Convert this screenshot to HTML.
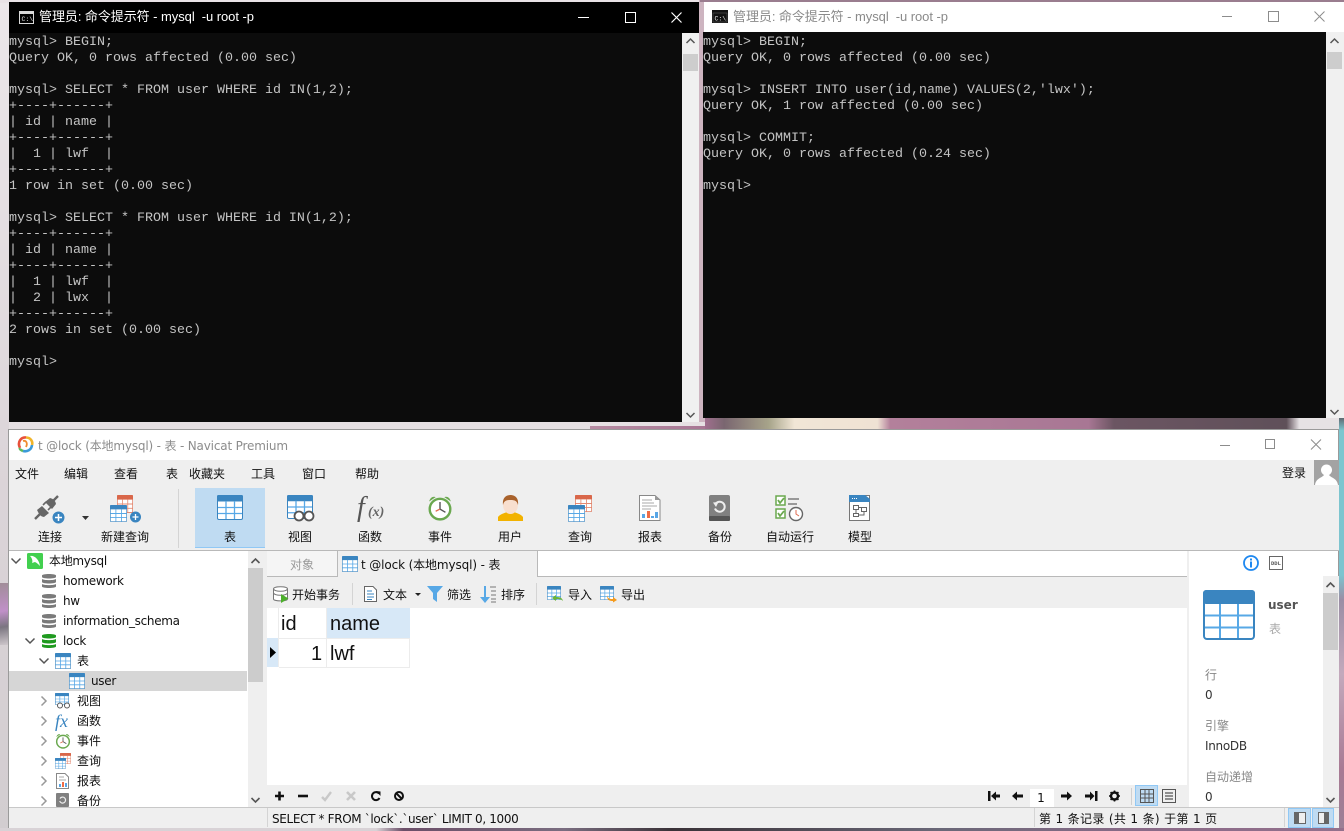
<!DOCTYPE html>
<html lang="zh"><head><meta charset="utf-8"><title>Navicat</title>
<style>
html,body{margin:0;padding:0}
body{width:1344px;height:831px;overflow:hidden;position:relative;background:#dcd6da}
div,pre,svg{position:absolute}
pre{margin:0}
.t{position:absolute;white-space:pre;font:12px/16px "DejaVu Sans","Noto Sans CJK SC",sans-serif;color:#111}
.c{transform:translateX(-50%)}
.l{letter-spacing:-.3px}
.term{font:13.333px/16px "Liberation Mono",monospace;color:#c4c4c4;white-space:pre}
svg{overflow:visible}
</style></head><body>
<svg width="0" height="0" style="left:0;top:0">
<defs>
<symbol id="tb" viewBox="0 0 26 25" preserveAspectRatio="none">
<rect x=".5" y=".5" width="25" height="24" rx="1.5" fill="#fff" stroke="#3a85c0"/>
<rect x="0" y="0" width="26" height="6.5" rx="1.5" fill="#3a85c0"/>
<path d="M1 12.5H25M1 18.5H25M9 6V24M17.500 6V24" stroke="#57a8e6" stroke-width="1.300" fill="none"/>
</symbol>
<symbol id="to" viewBox="0 0 26 25" preserveAspectRatio="none">
<rect x=".5" y=".5" width="25" height="24" rx="1.5" fill="#fff" stroke="#d9674a"/>
<rect x="0" y="0" width="26" height="6.500" rx="1.5" fill="#d9674a"/>
<path d="M1 12.500H25M1 18.500H25M9 6V24M17.500 6V24" stroke="#e58b73" stroke-width="1.300" fill="none"/>
</symbol>
<symbol id="db" viewBox="0 0 14 16" preserveAspectRatio="none">
<path d="M0 2.500C0 .5 14 .5 14 2.500V4C14 6 0 6 0 4ZM0 6C2 7.500 12 7.500 14 6V9C14 11 0 11 0 9ZM0 11C2 12.500 12 12.500 14 11V13.500C14 15.500 0 15.500 0 13.500Z" fill="currentColor"/>
</symbol>
<symbol id="cl" viewBox="0 0 24 24">
<circle cx="12" cy="13" r="9.500" fill="#fff" stroke="#6aa84f" stroke-width="2.200"/>
<path d="M12 6.500V13L17 16" stroke="#555" stroke-width="1.300" fill="none"/>
<path d="M12 13L8 15" stroke="#e06b50" stroke-width="1.200"/>
<path d="M2 6C3 2 6 1 8 2ZM22 6C21 2 18 1 16 2Z" fill="#6aa84f"/>
</symbol>
</defs>
</svg>

<!-- wallpaper -->
<div style="left:0;top:0;width:9px;height:831px;background:linear-gradient(#ece7ea,#dcd5d9 55%,#d2cdd0)"></div>
<div style="left:0;top:0;width:704px;height:3px;background:#e9e2e6"></div>
<div style="left:699px;top:0;width:6px;height:422px;background:#cdb4c0"></div>
<div style="left:700px;top:0;width:644px;height:2px;background:#9a7d8f"></div>
<div style="left:9px;top:422px;width:696px;height:8px;background:#e6e0e3"></div>
<div style="left:590px;top:426px;width:115px;height:4px;background:linear-gradient(90deg,#b78ba2,#a87794)"></div>
<div style="left:705px;top:418px;width:639px;height:12px;background:linear-gradient(90deg,#a06f8e 0,#7a6670 3%,#a7a48a 10%,#f1e6d6 14%,#efe2d4 27%,#b3809b 29%,#a87794 60%,#6b5562 64%,#5f5059 91%,#e6e2e4 93%)"></div>
<div style="left:0;top:583px;width:9px;height:62px;background:linear-gradient(170deg,#a08d98,#c090c8 45%,#7a7580 70%,#cfc8cc)"></div>
<div style="left:1339px;top:418px;width:5px;height:413px;background:linear-gradient(#5f6a72 0,#7cc6cf 3%,#7dc4cf 38%,#9a8ea5 44%,#c3a9bc 62%,#a87a94 85%,#9b8096)"></div>
<div style="left:0;top:828px;width:1344px;height:3px;background:linear-gradient(90deg,#d8d2d6 0,#d8d2d6 28%,#6b4e68 30%,#7a6d80 42%,#3a3238 50%,#6a6878 70%,#8a6a88 85%,#93708c)"></div>

<!-- left terminal -->
<div style="left:9px;top:2px;width:690px;height:31px;background:#000"></div>
<svg style="left:19px;top:11px" width="15" height="13"><rect x=".5" y=".5" width="14" height="12" fill="#000" stroke="#d8d8d8"/><rect x="1" y="1" width="13" height="2" fill="#d8d8d8"/><text x="2.500" y="10" font-size="6.500" fill="#e8e8e8" font-family="Liberation Mono">C:\</text></svg>
<div class="t" style="left:39px;top:9px;color:#fff;font-family:'Liberation Sans','Noto Sans CJK SC',sans-serif;font-size:13px;letter-spacing:-.06px">管理员: 命令提示符 - mysql  -u root -p</div>
<svg style="left:578px;top:10px" width="110" height="14" fill="none" stroke="#fff" stroke-width="1"><path d="M0 7.500H11"/><rect x="47.500" y="2.500" width="10" height="10"/><path d="M93.500 2.500L103.500 12.500M103.500 2.500L93.500 12.500" stroke-width="1.200"/></svg>
<div style="left:9px;top:33px;width:673px;height:389px;background:#0c0c0c"></div>
<pre class="term" style="left:9px;top:35px">mysql&gt; BEGIN;
Query OK, 0 rows affected (0.00 sec)

mysql&gt; SELECT * FROM user WHERE id IN(1,2);
+----+------+
| id | name |
+----+------+
|  1 | lwf  |
+----+------+
1 row in set (0.00 sec)

mysql&gt; SELECT * FROM user WHERE id IN(1,2);
+----+------+
| id | name |
+----+------+
|  1 | lwf  |
|  2 | lwx  |
+----+------+
2 rows in set (0.00 sec)

mysql&gt;</pre>
<div style="left:682px;top:33px;width:17px;height:389px;background:#f0f0f0"></div>
<div style="left:683px;top:54px;width:15px;height:17px;background:#cdcdcd"></div>
<svg style="left:686px;top:38px" width="9" height="6"><path d="M.5 5L4.500 1L8.500 5" fill="none" stroke="#555" stroke-width="1.500"/></svg>
<svg style="left:686px;top:412px" width="9" height="6"><path d="M.5 1L4.500 5L8.500 1" fill="none" stroke="#555" stroke-width="1.500"/></svg>

<!-- right terminal -->
<div style="left:704px;top:2px;width:640px;height:30px;background:#fff"></div>
<svg style="left:712px;top:10px" width="16" height="13"><rect width="16" height="13" fill="#111"/><rect x="1" y="3" width="14" height="9" fill="#111" stroke="#666" stroke-width=".5"/><text x="2.500" y="10.500" font-size="6.500" fill="#eee" font-family="Liberation Mono">C:\</text></svg>
<div class="t" style="left:733px;top:9px;color:#8a8a8a;font-family:'Liberation Sans','Noto Sans CJK SC',sans-serif;font-size:13px;letter-spacing:-.06px">管理员: 命令提示符 - mysql  -u root -p</div>
<svg style="left:1222px;top:9px" width="110" height="14" fill="none" stroke="#8c8c8c" stroke-width="1"><path d="M0 7.500H10"/><rect x="46.500" y="2.500" width="10" height="10"/><path d="M92.500 2.500L102.500 12.500M102.500 2.500L92.500 12.500"/></svg>
<div style="left:703px;top:32px;width:623px;height:386px;background:#0c0c0c"></div>
<pre class="term" style="left:703px;top:35px">mysql&gt; BEGIN;
Query OK, 0 rows affected (0.00 sec)

mysql&gt; INSERT INTO user(id,name) VALUES(2,'lwx');
Query OK, 1 row affected (0.00 sec)

mysql&gt; COMMIT;
Query OK, 0 rows affected (0.24 sec)

mysql&gt;</pre>
<div style="left:1326px;top:32px;width:18px;height:386px;background:#f0f0f0"></div>
<div style="left:1327px;top:52px;width:15px;height:17px;background:#cdcdcd"></div>
<svg style="left:1330px;top:38px" width="9" height="6"><path d="M.5 5L4.500 1L8.500 5" fill="none" stroke="#555" stroke-width="1.500"/></svg>
<svg style="left:1330px;top:409px" width="9" height="6"><path d="M.5 1L4.500 5L8.500 1" fill="none" stroke="#555" stroke-width="1.500"/></svg>

<!-- navicat -->
<div style="left:8px;top:429px;width:1331px;height:399px;background:#fff;border:1px solid #9a9a9a;box-sizing:border-box"></div>
<div style="left:9px;top:460px;width:1330px;height:90px;background:#efefef"></div>
<div style="left:9px;top:550px;width:1330px;height:1px;background:#b9b9b9"></div>
<svg style="left:17px;top:436px" width="17" height="17" fill="none" stroke-width="2.600"><path d="M3 12C0 6 4 1 9 1.500" stroke="#e8503a"/><path d="M9 1.500C14 1.500 16 6 15 9" stroke="#f0b429"/><path d="M15 9C14.500 14 10 16 6 15" stroke="#3a9ad9"/><path d="M6 15C3.500 14 2.500 13 3 12" stroke="#5cb85c"/><path d="M6 5C9 4 11 7 9 11" stroke="#f08c30" stroke-width="1.800"/></svg>
<div class="t" style="left:38px;top:438px;color:#8c8c8c;letter-spacing:-.17px">t @lock (本地mysql) - 表 - Navicat Premium</div>
<svg style="left:1220px;top:438px" width="110" height="14" fill="none" stroke="#8c8c8c"><path d="M0 7.500H10"/><rect x="45.500" y="1.500" width="9" height="9"/><path d="M91 1.500L101 11.500M101 1.500L91 11.500"/></svg>
<div class="t" style="left:15px;top:466px">文件</div><div class="t" style="left:64px;top:466px">编辑</div><div class="t" style="left:114px;top:466px">查看</div><div class="t" style="left:166px;top:466px">表</div><div class="t" style="left:189px;top:466px">收藏夹</div><div class="t" style="left:251px;top:466px">工具</div><div class="t" style="left:302px;top:466px">窗口</div><div class="t" style="left:355px;top:466px">帮助</div>
<div class="t" style="left:1282px;top:465px">登录</div>
<div style="left:1314px;top:460px;width:25px;height:25px;background:#a3a3a3"></div>
<svg style="left:1314px;top:460px" width="25" height="25"><circle cx="12.500" cy="10" r="5.500" fill="#fff"/><path d="M1 25C2 18 8 18 10 15H15C17 18 23 18 24 25Z" fill="#fff"/></svg>

<div style="left:178px;top:489px;width:1px;height:59px;background:#d4d4d4"></div>
<div style="left:195px;top:488px;width:70px;height:60px;background:#bfdbf2;border-bottom:1px solid #90c8f5;box-sizing:border-box"></div>

<!-- toolbar icons -->
<svg style="left:34px;top:495px" width="32" height="31"><path d="M1 24L6 19M19 6L24 1" stroke="#666" stroke-width="2.400"/><path d="M3 15L8 11L15 18L10 22Q6 22 3 15ZM11 7L16 3Q21 4 22 9L18 14Z" fill="#666"/><path d="M9 10L12 7M14 15L17 12" stroke="#666" stroke-width="1.600"/><circle cx="24.500" cy="22.500" r="6" fill="#3a85c0"/><path d="M21 22.500H28M24.500 19V26" stroke="#fff" stroke-width="1.500"/></svg>
<svg style="left:82px;top:516px" width="7" height="4"><path d="M0 0H7L3.500 4Z" fill="#333"/></svg>
<svg style="left:110px;top:495px" width="32" height="28"><use href="#to" x="7" y="0" width="16" height="18"/><use href="#tb" x="0" y="10" width="17" height="17"/><circle cx="25.500" cy="22" r="5.500" fill="#3a85c0"/><path d="M22.500 22H28.500M25.500 19V25" stroke="#fff" stroke-width="1.300"/></svg>
<svg style="left:217px;top:495px" width="26" height="25"><use href="#tb" width="26" height="25"/></svg>
<svg style="left:287px;top:495px" width="28" height="27"><use href="#tb" width="26" height="24"/><circle cx="12" cy="21" r="4.500" fill="#fff" stroke="#555" stroke-width="1.800"/><circle cx="22" cy="21" r="4.500" fill="#fff" stroke="#555" stroke-width="1.800"/></svg>
<div class="t" style="left:357px;top:492px;font:italic 28px/32px 'Liberation Serif',serif;color:#555">f</div><div class="t" style="left:368px;top:505px;font:italic bold 14px/16px 'Liberation Serif',serif;color:#666">(x)</div>
<svg style="left:427px;top:495px" width="26" height="26"><use href="#cl" width="26" height="26"/></svg>
<svg style="left:498px;top:495px" width="25" height="26"><path d="M0 26V22C2 19 7 18 9 17H16C18 18 23 19 25 22V26Z" fill="#f2b200"/><ellipse cx="12.500" cy="10" rx="7.500" ry="9" fill="#f8dfcf"/><path d="M5 10C4 2 9 0 12.500 0C16 0 21 2 20 10C19 6 17 5 12.500 5C8 5 6 6 5 10Z" fill="#a9622c"/></svg>
<svg style="left:568px;top:495px" width="26" height="27"><use href="#to" x="7" y="0" width="17" height="17"/><use href="#tb" x="0" y="10" width="17" height="17"/></svg>
<svg style="left:639px;top:495px" width="22" height="26"><path d="M.5.5H16L21 5V25.500H.5Z" fill="#fff" stroke="#888"/><path d="M16 .5V5H21Z" fill="#999"/><path d="M3 5H13M3 8H15M3 11H18M3 14H12" stroke="#aaa"/><rect x="3" y="19" width="3" height="4" fill="#58a6e6"/><rect x="8" y="16" width="3" height="7" fill="#ef6c45"/><rect x="12" y="21" width="3" height="2" fill="#58a6e6"/><rect x="16" y="17" width="3" height="6" fill="#58a6e6"/></svg>
<svg style="left:709px;top:495px" width="21" height="26"><rect width="21" height="26" rx="2" fill="#808080"/><rect y="21" width="21" height="5" rx="1" fill="#555"/><path d="M6.500 9A5 5 0 1 1 6 13.500" fill="none" stroke="#eee" stroke-width="2"/><path d="M4 7.500L9.500 7L7 12Z" fill="#eee"/></svg>
<svg style="left:775px;top:495px" width="30" height="27"><rect x="1" y="1" width="9" height="9" fill="#fff" stroke="#6aa84f" stroke-width="1.500"/><rect x="1" y="14" width="9" height="9" fill="#fff" stroke="#6aa84f" stroke-width="1.500"/><path d="M3 5L5 8L9 3M3 18L5 21L9 16" fill="none" stroke="#6aa84f" stroke-width="1.800"/><path d="M13 4H24M13 9H22" stroke="#999" stroke-width="2"/><circle cx="21" cy="19" r="6.500" fill="#fff" stroke="#666" stroke-width="1.400"/><path d="M21 15V19L24 21" stroke="#e06b50" fill="none"/></svg>
<svg style="left:849px;top:495px" width="21" height="26"><rect x=".5" y=".5" width="20" height="25" fill="#fff" stroke="#777"/><path d="M0 0H16L21 4V7H0Z" fill="#3a85c0"/><path d="M3 3.500H8" stroke="#fff" stroke-dasharray="1 1"/><path d="M4.500 10.500h5v4h-5zM12.500 12.500h5v4h-5zM4.500 18.500h5v3h-5zM9.500 12.500h3M7 14.500v4M15 16.500v3.500h-5.500" fill="none" stroke="#666"/></svg>

<div class="t c" style="left:50px;top:529px">连接</div><div class="t c" style="left:125px;top:529px">新建查询</div><div class="t c" style="left:230px;top:529px">表</div><div class="t c" style="left:300px;top:529px">视图</div><div class="t c" style="left:370px;top:529px">函数</div><div class="t c" style="left:440px;top:529px">事件</div><div class="t c" style="left:510px;top:529px">用户</div><div class="t c" style="left:580px;top:529px">查询</div><div class="t c" style="left:650px;top:529px">报表</div><div class="t c" style="left:720px;top:529px">备份</div><div class="t c" style="left:790px;top:529px">自动运行</div><div class="t c" style="left:860px;top:529px">模型</div>

<!-- sidebar -->
<div style="left:9px;top:671px;width:238px;height:20px;background:#d6d6d6"></div>
<div style="left:248px;top:551px;width:19px;height:256px;background:#efefef"></div>
<div style="left:248px;top:568px;width:15px;height:114px;background:#cccccc"></div>
<svg style="left:251px;top:558px" width="9" height="6"><path d="M.5 5L4.500 1L8.500 5" fill="none" stroke="#555" stroke-width="1.600"/></svg>
<svg style="left:251px;top:797px" width="9" height="6"><path d="M.5 1L4.500 5L8.500 1" fill="none" stroke="#555" stroke-width="1.600"/></svg>
<svg style="left:11px;top:558px" width="10" height="6"><path d="M.5.5L5 5L9.500.5" fill="none" stroke="#555" stroke-width="1.500"/></svg>
<svg style="left:27px;top:553px" width="16" height="16"><rect width="16" height="16" rx="1.500" fill="#42d04f"/><path d="M3 3C7 2 12 6 13 13C11 11 10 10 8 9L5 10C6 8 5 5 3 3Z" fill="#fff"/></svg>
<div class="t l" style="left:49px;top:553px">本地mysql</div>
<svg style="left:42px;top:573px;color:#7a7a7a" width="14" height="16"><use href="#db" width="14" height="16"/></svg><div class="t l" style="left:63px;top:573px">homework</div>
<svg style="left:42px;top:593px;color:#7a7a7a" width="14" height="16"><use href="#db" width="14" height="16"/></svg><div class="t l" style="left:63px;top:593px">hw</div>
<svg style="left:42px;top:613px;color:#7a7a7a" width="14" height="16"><use href="#db" width="14" height="16"/></svg><div class="t l" style="left:63px;top:613px">information_schema</div>
<svg style="left:25px;top:638px" width="10" height="6"><path d="M.5.5L5 5L9.500.5" fill="none" stroke="#555" stroke-width="1.500"/></svg>
<svg style="left:42px;top:633px;color:#1f9a1f" width="14" height="16"><use href="#db" width="14" height="16"/></svg><div class="t l" style="left:63px;top:633px">lock</div>
<svg style="left:39px;top:658px" width="10" height="6"><path d="M.5.5L5 5L9.500.5" fill="none" stroke="#555" stroke-width="1.500"/></svg>
<svg style="left:55px;top:653px" width="16" height="16"><use href="#tb" width="16" height="16"/></svg><div class="t" style="left:77px;top:653px">表</div>
<svg style="left:69px;top:673px" width="16" height="16"><use href="#tb" width="16" height="16"/></svg><div class="t l" style="left:91px;top:673px">user</div>
<svg style="left:41px;top:696px" width="6" height="10"><path d="M.5.5L5 5L.5 9.500" fill="none" stroke="#999" stroke-width="1.500"/></svg>
<svg style="left:55px;top:693px" width="16" height="16"><use href="#tb" width="14" height="12"/><circle cx="5" cy="12.500" r="2.500" fill="#fff" stroke="#555"/><circle cx="12" cy="12.500" r="2.500" fill="#fff" stroke="#555"/></svg><div class="t" style="left:77px;top:693px">视图</div>
<svg style="left:41px;top:716px" width="6" height="10"><path d="M.5.5L5 5L.5 9.500" fill="none" stroke="#999" stroke-width="1.500"/></svg>
<div class="t" style="left:55px;top:712px;font:italic 18px/18px 'Liberation Serif',serif;color:#3a85c0">fx</div><div class="t" style="left:77px;top:713px">函数</div>
<svg style="left:41px;top:736px" width="6" height="10"><path d="M.5.5L5 5L.5 9.500" fill="none" stroke="#999" stroke-width="1.500"/></svg>
<svg style="left:55px;top:733px" width="16" height="16"><use href="#cl" width="16" height="16"/></svg><div class="t" style="left:77px;top:733px">事件</div>
<svg style="left:41px;top:756px" width="6" height="10"><path d="M.5.5L5 5L.5 9.500" fill="none" stroke="#999" stroke-width="1.500"/></svg>
<svg style="left:55px;top:753px" width="17" height="16"><use href="#to" x="5" y="0" width="11" height="11"/><use href="#tb" x="0" y="5" width="11" height="11"/></svg><div class="t" style="left:77px;top:753px">查询</div>
<svg style="left:41px;top:776px" width="6" height="10"><path d="M.5.5L5 5L.5 9.500" fill="none" stroke="#999" stroke-width="1.500"/></svg>
<svg style="left:56px;top:773px" width="13" height="16"><path d="M.5.5H9L12.500 4V15.500H.5Z" fill="#fff" stroke="#888"/><path d="M3 4H8M3 7H10" stroke="#aaa"/><rect x="3" y="11" width="2" height="3" fill="#58a6e6"/><rect x="6" y="9" width="2" height="5" fill="#ef6c45"/><rect x="9" y="10" width="2" height="4" fill="#58a6e6"/></svg><div class="t" style="left:77px;top:773px">报表</div>
<svg style="left:41px;top:796px" width="6" height="10"><path d="M.5.5L5 5L.5 9.500" fill="none" stroke="#999" stroke-width="1.500"/></svg>
<svg style="left:56px;top:793px" width="13" height="14"><rect width="13" height="14" rx="1" fill="#808080"/><path d="M4 5.500A3 3 0 1 1 3.700 8" fill="none" stroke="#eee" stroke-width="1.200"/></svg><div class="t" style="left:77px;top:793px">备份</div>

<!-- tabs -->
<div style="left:267px;top:551px;width:71px;height:26px;background:#f5f5f5;border-bottom:1px solid #b9b9b9;border-right:1px solid #b9b9b9;box-sizing:border-box"></div>
<div class="t c" style="left:302px;top:557px;color:#999">对象</div>
<div style="left:338px;top:551px;width:199px;height:26px;background:#efefef"></div>
<svg style="left:342px;top:556px" width="16" height="16"><use href="#tb" width="16" height="16"/></svg>
<div class="t" style="left:361px;top:557px;letter-spacing:-.12px">t @lock (本地mysql) - 表</div>
<div style="left:537px;top:551px;width:650px;height:26px;border-left:1px solid #b9b9b9;border-bottom:1px solid #b9b9b9;box-sizing:border-box;background:#fff"></div>
<div style="left:267px;top:577px;width:920px;height:31px;background:#efefef"></div>
<svg style="left:273px;top:586px" width="16" height="17"><path d="M.5 3C.5 0 14.500 0 14.500 3V13C14.500 15.500.5 15.500.5 13Z" fill="#fff" stroke="#777"/><path d="M.5 3C2 6 13 6 14.500 3M.5 7C2 10 13 10 14.500 7" fill="none" stroke="#777"/><path d="M8 8L15.500 12.500L8 17Z" fill="#4caf2c"/></svg>
<div class="t" style="left:292px;top:587px">开始事务</div>
<div style="left:352px;top:583px;width:1px;height:22px;background:#d4d4d4"></div>
<svg style="left:364px;top:586px" width="13" height="16"><path d="M.5.5H9L12.500 4V15.500H.5Z" fill="#fff" stroke="#666"/><path d="M3 5H8M3 8H10M3 11H10M3 13.500H8" stroke="#3a85c0"/></svg>
<div class="t" style="left:383px;top:587px">文本</div>
<svg style="left:415px;top:593px" width="6" height="3"><path d="M0 0H6L3 3Z" fill="#222"/></svg>
<svg style="left:427px;top:586px" width="16" height="16"><path d="M0 0H16L10 7V16L6 13V7Z" fill="#57a8e6"/></svg>
<div class="t" style="left:447px;top:587px">筛选</div>
<svg style="left:480px;top:586px" width="17" height="17"><path d="M5 0V12" stroke="#57a8e6" stroke-width="2"/><path d="M0 11H10L5 17Z" fill="#57a8e6"/><path d="M10 1H16M11 5H16M11 9H16M11 13H16M11 16H16" stroke="#777"/></svg>
<div class="t" style="left:501px;top:587px">排序</div>
<div style="left:536px;top:583px;width:1px;height:22px;background:#d4d4d4"></div>
<svg style="left:547px;top:586px" width="17" height="16"><use href="#tb" width="14" height="14"/><path d="M16 15C15 11 12 11 9 11V9L5 12L9 15V13C12 13 14 13 16 15Z" fill="#6cb63a"/></svg>
<div class="t" style="left:568px;top:587px">导入</div>
<svg style="left:600px;top:586px" width="17" height="16"><use href="#tb" width="14" height="14"/><path d="M7 9C8 13 10 13 13 13V11L17 14L13 16.500V15C9 15 7 14 7 9Z" fill="#f59a1b"/></svg>
<div class="t" style="left:621px;top:587px">导出</div>

<!-- grid -->
<div style="left:278px;top:608px;width:1px;height:59px;background:#ececec"></div>
<div style="left:279px;top:608px;width:47px;height:30px;background:#fff;border-right:1px solid #ececec;border-bottom:1px solid #ececec"></div>
<div style="left:327px;top:608px;width:83px;height:30px;background:#d7e8f7;border-bottom:1px solid #ececec"></div>
<div style="left:267px;top:638px;width:11px;height:29px;background:#d7e8f7"></div>
<div style="left:279px;top:638px;width:47px;height:29px;border-right:1px solid #ececec;border-bottom:1px solid #ececec"></div>
<div style="left:327px;top:638px;width:82px;height:29px;border-right:1px solid #ececec;border-bottom:1px solid #ececec"></div>
<svg style="left:270px;top:647px" width="6" height="11"><path d="M0 0L6 5.500L0 11Z" fill="#000"/></svg>
<div class="t" style="left:281px;top:613px;font:20px/22px 'Liberation Sans',sans-serif">id</div>
<div class="t" style="left:330px;top:613px;font:20px/22px 'Liberation Sans',sans-serif">name</div>
<div class="t" style="left:311px;top:643px;font:20px/22px 'Liberation Sans',sans-serif">1</div>
<div class="t" style="left:330px;top:643px;font:20px/22px 'Liberation Sans',sans-serif">lwf</div>

<!-- grid bottom toolbar -->
<div style="left:267px;top:785px;width:920px;height:22px;background:#efefef"></div>
<svg style="left:274px;top:790px" width="132" height="13">
<path d="M5.500 1.500V10.500M1 6H10" stroke="#111" stroke-width="2.600"/>
<path d="M24 6H34" stroke="#111" stroke-width="2.600"/>
<path d="M48 7L51 10L57 2" fill="none" stroke="#c8c8c8" stroke-width="2.400"/>
<path d="M73 2L81 10M81 2L73 10" stroke="#c8c8c8" stroke-width="2.600"/>
<path d="M105 3.500A4 4 0 1 0 105.500 8" fill="none" stroke="#111" stroke-width="2"/><path d="M102 1L106.500 1.500V6Z" fill="#111"/>
<circle cx="125" cy="6" r="4" fill="none" stroke="#111" stroke-width="2"/><path d="M122 3L128 9" stroke="#111" stroke-width="2"/>
</svg>
<svg style="left:988px;top:790px" width="135" height="13" fill="#111">
<path d="M0 1H2.500V11H0ZM3 6L8 1.500V4.500H12V7.500H8V10.500Z"/>
<path d="M24 6L29 1.500V4.500H35V7.500H29V10.500Z"/>
<path d="M84 6L79 1.500V4.500H73V7.500H79V10.500Z"/>
<path d="M107 1H109.500V11H107ZM106.500 6L102 1.500V4.500H97V7.500H102V10.500Z"/>
<circle cx="126.500" cy="6" r="3.500" fill="none" stroke="#111" stroke-width="2.400"/><path d="M126.500 .5V2.500M126.500 9.500V11.500M121 6H123M130 6H132M122.600 2.100L124 3.500M129 8.500L130.400 9.900M122.600 9.900L124 8.500M129 3.500L130.400 2.100" stroke="#111" stroke-width="1.600"/>
</svg>
<div style="left:1030px;top:789px;width:24px;height:18px;background:#fff"></div>
<div class="t c" style="left:1041px;top:790px">1</div>
<div style="left:1131px;top:788px;width:1px;height:17px;background:#d0d0d0"></div>
<div style="left:1135px;top:785px;width:23px;height:21px;background:#bfdbf2;border:1px solid #90c8f5;box-sizing:border-box"></div>
<svg style="left:1140px;top:789px" width="14" height="14" fill="none" stroke="#555"><path d="M.5.5H13.500V13.500H.5ZM.5 5H13.500M.5 9H13.500M5 .5V13.500M9 .5V13.500"/></svg>
<svg style="left:1162px;top:789px" width="14" height="14" fill="none" stroke="#555"><rect x=".5" y=".5" width="13" height="13"/><path d="M3 4H11M3 7H11M3 10H11" stroke-width="1.300"/></svg>

<!-- right panel -->
<div style="left:1187px;top:551px;width:2px;height:256px;background:#efefef"></div>
<div style="left:1323px;top:576px;width:16px;height:231px;background:#efefef"></div>
<div style="left:1323px;top:593px;width:15px;height:57px;background:#cccccc"></div>
<svg style="left:1326px;top:582px" width="9" height="6"><path d="M.5 5L4.500 1L8.500 5" fill="none" stroke="#555" stroke-width="1.600"/></svg>
<svg style="left:1326px;top:797px" width="9" height="6"><path d="M.5 1L4.500 5L8.500 1" fill="none" stroke="#555" stroke-width="1.600"/></svg>
<svg style="left:1243px;top:555px" width="16" height="16"><circle cx="8" cy="8" r="7" fill="#fff" stroke="#1e88f0" stroke-width="1.800"/><rect x="7" y="3.500" width="2" height="2" fill="#1e88f0"/><rect x="7" y="6.500" width="2" height="6" fill="#1e88f0"/></svg>
<svg style="left:1269px;top:556px" width="14" height="14"><rect x=".5" y=".5" width="13" height="13" fill="#fff" stroke="#666"/><text x="2" y="9" font-size="5.500" font-weight="bold" fill="#555" font-family="Liberation Mono">DDL</text></svg>
<svg style="left:1203px;top:590px" width="52" height="50"><rect x="1" y="1" width="50" height="48" rx="3" fill="#fff" stroke="#3a85c0" stroke-width="2"/><rect width="52" height="14" rx="3" fill="#3a85c0"/><path d="M2 25.500H50M2 37.500H50M17 14V48M35 14V48" stroke="#57a8e6" stroke-width="2" fill="none"/></svg>
<div class="t" style="left:1268px;top:597px;font-weight:bold;color:#555">user</div>
<div class="t" style="left:1269px;top:621px;color:#aaa">表</div>
<div class="t" style="left:1205px;top:667px;color:#888">行</div>
<div class="t" style="left:1205px;top:687px;color:#333">0</div>
<div class="t" style="left:1205px;top:718px;color:#888">引擎</div>
<div class="t l" style="left:1205px;top:738px;color:#333">InnoDB</div>
<div class="t" style="left:1205px;top:769px;color:#888">自动递增</div>
<div class="t" style="left:1205px;top:789px;color:#333">0</div>

<!-- status bar -->
<div style="left:9px;top:807px;width:1330px;height:21px;background:#efefef;border-top:1px solid #c8c8c8;box-sizing:border-box"></div>
<div style="left:267px;top:808px;width:1px;height:19px;background:#d4d4d4"></div>
<div style="left:1034px;top:808px;width:1px;height:19px;background:#d4d4d4"></div>
<div style="left:1284px;top:808px;width:1px;height:19px;background:#d4d4d4"></div>
<div class="t" style="left:272px;top:811px;letter-spacing:-.35px">SELECT * FROM `lock`.`user` LIMIT 0, 1000</div>
<div class="t" style="left:1039px;top:811px;letter-spacing:.35px">第 1 条记录 (共 1 条) 于第 1 页</div>
<div style="left:1288px;top:808px;width:23px;height:20px;background:#bfdbf2;border:1px solid #90c8f5;box-sizing:border-box"></div>
<div style="left:1312px;top:808px;width:22px;height:20px;background:#bfdbf2;border:1px solid #90c8f5;box-sizing:border-box"></div>
<svg style="left:1294px;top:812px" width="35" height="13"><rect x=".5" y=".5" width="11" height="11" fill="#efefef" stroke="#666"/><rect x="1" y="1" width="4" height="10" fill="#666"/><rect x="24.500" y=".5" width="10" height="11" fill="#efefef" stroke="#666"/><rect x="30" y="1" width="4" height="10" fill="#666"/></svg>
</body></html>
